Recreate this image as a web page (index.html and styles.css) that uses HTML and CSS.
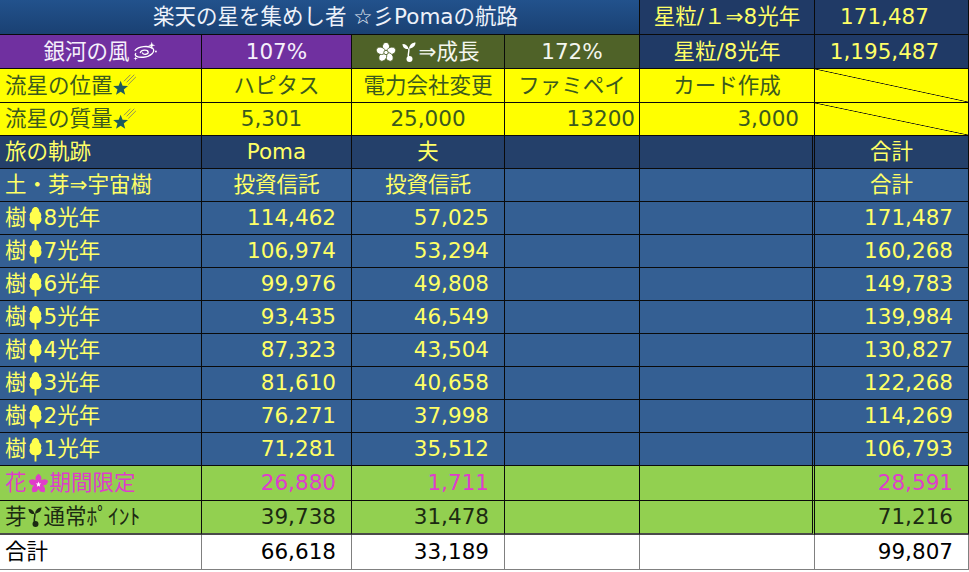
FILE: index.html
```html
<!DOCTYPE html>
<html lang="ja">
<head>
<meta charset="utf-8">
<title>楽天の星を集めし者 ☆彡Pomaの航路</title>
<link rel="stylesheet" href="styles.css">
</head>
<body>
<div class="sheet">
  <!-- row 1 -->
  <div class="c title span4">楽天の星を集めし者 ☆彡Pomaの航路</div>
  <div class="c navy m">星粒/１⇒8光年</div>
  <div class="c navy m shift">171,487</div>

  <!-- row 2 -->
  <div class="c purple m">銀河の風<svg class="ico galaxy" viewBox="0 0 26 20" width="27" height="21"><g fill="none" stroke="#fff" stroke-width="1.3" stroke-linecap="round"><path d="M4 9 C7 5 17 4 21 7 C24 10 19 15 12 15.5 C6 16 3 14 4.5 12"/><path d="M9 11 C10 8 16 8 16.5 10.5 C17 13 12 13.5 11 11.5"/></g><path d="M20 0.5 L20.8 3.2 L23.5 4 L20.8 4.8 L20 7.5 L19.2 4.8 L16.5 4 L19.2 3.2Z" fill="#fff"/><path d="M4.5 14.5 L5 16.2 L6.7 16.7 L5 17.2 L4.5 18.9 L4 17.2 L2.3 16.7 L4 16.2Z" fill="#fff"/><circle cx="24" cy="10" r="0.9" fill="#fff"/></svg></div>
  <div class="c purple m">107%</div>
  <div class="c olive m"><svg class="ico sakura" viewBox="0 0 20 20" width="20" height="20"><g fill="#fff" stroke="#4f6228" stroke-width="0.8"><ellipse cx="10" cy="5" rx="3.6" ry="4.6"/><ellipse cx="10" cy="5" rx="3.6" ry="4.6" transform="rotate(72 10 10.5)"/><ellipse cx="10" cy="5" rx="3.6" ry="4.6" transform="rotate(144 10 10.5)"/><ellipse cx="10" cy="5" rx="3.6" ry="4.6" transform="rotate(216 10 10.5)"/><ellipse cx="10" cy="5" rx="3.6" ry="4.6" transform="rotate(288 10 10.5)"/></g><circle cx="10" cy="10.5" r="2.2" fill="#fff" stroke="#4f6228" stroke-width="0.9"/></svg><svg class="ico sprout" viewBox="0 0 14 22" width="14" height="22"><g fill="#fff"><path d="M6.5 8 C3 8.5 0.5 6.5 0.5 3 C4 3 6.2 5 6.5 8Z"/><path d="M7 7.5 C7.5 3.5 10.5 1.5 13.5 1.5 C13.5 5 10.5 7.5 7 7.5Z"/><circle cx="7.5" cy="18" r="3"/></g><path d="M6.8 7.5 C7.5 11 5.5 13 6.5 16" fill="none" stroke="#fff" stroke-width="1.5"/></svg>⇒成長</div>
  <div class="c olive m">172%</div>
  <div class="c navy m">星粒/8光年</div>
  <div class="c navy m shift">1,195,487</div>

  <!-- row 3 -->
  <div class="c yellow l">流星の位置<svg class="ico shoot" viewBox="0 0 22 22" width="24" height="24"><g stroke="#8d8f55" stroke-width="0.9"><line x1="10" y1="8.5" x2="16" y2="2.5"/><line x1="12.5" y1="9.5" x2="19.5" y2="2.5"/><line x1="14" y1="11.5" x2="21" y2="4.5"/></g><path d="M7 8 L8.8 12.7 L13.8 12.9 L9.9 16 L11.2 20.8 L7 18 L2.8 20.8 L4.1 16 L0.2 12.9 L5.2 12.7Z" fill="#1e5b5e"/></svg></div>
  <div class="c yellow m">ハピタス</div>
  <div class="c yellow m">電力会社変更</div>
  <div class="c yellow m">ファミペイ</div>
  <div class="c yellow m">カード作成</div>
  <div class="c yellow diag"></div>

  <!-- row 4 -->
  <div class="c yellow l">流星の質量<svg class="ico shoot" viewBox="0 0 22 22" width="24" height="24"><g stroke="#8d8f55" stroke-width="0.9"><line x1="10" y1="8.5" x2="16" y2="2.5"/><line x1="12.5" y1="9.5" x2="19.5" y2="2.5"/><line x1="14" y1="11.5" x2="21" y2="4.5"/></g><path d="M7 8 L8.8 12.7 L13.8 12.9 L9.9 16 L11.2 20.8 L7 18 L2.8 20.8 L4.1 16 L0.2 12.9 L5.2 12.7Z" fill="#1e5b5e"/></svg></div>
  <div class="c yellow m nudge">5,301</div>
  <div class="c yellow m">25,000</div>
  <div class="c yellow r tight">13200</div>
  <div class="c yellow r">3,000</div>
  <div class="c yellow diag"></div>

  <!-- row 5 -->
  <div class="c dark l">旅の軌跡</div>
  <div class="c dark m">Poma</div>
  <div class="c dark m">夫</div>
  <div class="c dark"></div>
  <div class="c dark dbl"></div>
  <div class="c dark m">合計</div>

  <!-- row 6 -->
  <div class="c blue l">土・芽⇒宇宙樹</div>
  <div class="c blue m">投資信託</div>
  <div class="c blue m">投資信託</div>
  <div class="c blue"></div>
  <div class="c blue dbl"></div>
  <div class="c blue m">合計</div>

  <!-- tree rows -->
  <div class="c blue l">樹<svg class="ico tree" viewBox="0 0 14 24" width="15" height="25"><path d="M7 1 C4.5 1 3.5 3.5 3.2 5.5 C1.5 6.5 1 9 1.8 10.5 C0.8 12 1 15 3 16.5 C4.5 17.8 9.5 17.8 11 16.5 C13 15 13.2 12 12.2 10.5 C13 9 12.5 6.5 10.8 5.5 C10.5 3.5 9.5 1 7 1Z" fill="#ffff4d"/><rect x="6.1" y="16" width="1.8" height="7.5" fill="#ffff4d"/></svg>8光年</div>
  <div class="c blue r">114,462</div>
  <div class="c blue r">57,025</div>
  <div class="c blue"></div>
  <div class="c blue dbl"></div>
  <div class="c blue r">171,487</div>

  <div class="c blue l">樹<svg class="ico tree" viewBox="0 0 14 24" width="15" height="25"><path d="M7 1 C4.5 1 3.5 3.5 3.2 5.5 C1.5 6.5 1 9 1.8 10.5 C0.8 12 1 15 3 16.5 C4.5 17.8 9.5 17.8 11 16.5 C13 15 13.2 12 12.2 10.5 C13 9 12.5 6.5 10.8 5.5 C10.5 3.5 9.5 1 7 1Z" fill="#ffff4d"/><rect x="6.1" y="16" width="1.8" height="7.5" fill="#ffff4d"/></svg>7光年</div>
  <div class="c blue r">106,974</div>
  <div class="c blue r">53,294</div>
  <div class="c blue"></div>
  <div class="c blue dbl"></div>
  <div class="c blue r">160,268</div>

  <div class="c blue l">樹<svg class="ico tree" viewBox="0 0 14 24" width="15" height="25"><path d="M7 1 C4.5 1 3.5 3.5 3.2 5.5 C1.5 6.5 1 9 1.8 10.5 C0.8 12 1 15 3 16.5 C4.5 17.8 9.5 17.8 11 16.5 C13 15 13.2 12 12.2 10.5 C13 9 12.5 6.5 10.8 5.5 C10.5 3.5 9.5 1 7 1Z" fill="#ffff4d"/><rect x="6.1" y="16" width="1.8" height="7.5" fill="#ffff4d"/></svg>6光年</div>
  <div class="c blue r">99,976</div>
  <div class="c blue r">49,808</div>
  <div class="c blue"></div>
  <div class="c blue dbl"></div>
  <div class="c blue r">149,783</div>

  <div class="c blue l">樹<svg class="ico tree" viewBox="0 0 14 24" width="15" height="25"><path d="M7 1 C4.5 1 3.5 3.5 3.2 5.5 C1.5 6.5 1 9 1.8 10.5 C0.8 12 1 15 3 16.5 C4.5 17.8 9.5 17.8 11 16.5 C13 15 13.2 12 12.2 10.5 C13 9 12.5 6.5 10.8 5.5 C10.5 3.5 9.5 1 7 1Z" fill="#ffff4d"/><rect x="6.1" y="16" width="1.8" height="7.5" fill="#ffff4d"/></svg>5光年</div>
  <div class="c blue r">93,435</div>
  <div class="c blue r">46,549</div>
  <div class="c blue"></div>
  <div class="c blue dbl"></div>
  <div class="c blue r">139,984</div>

  <div class="c blue l">樹<svg class="ico tree" viewBox="0 0 14 24" width="15" height="25"><path d="M7 1 C4.5 1 3.5 3.5 3.2 5.5 C1.5 6.5 1 9 1.8 10.5 C0.8 12 1 15 3 16.5 C4.5 17.8 9.5 17.8 11 16.5 C13 15 13.2 12 12.2 10.5 C13 9 12.5 6.5 10.8 5.5 C10.5 3.5 9.5 1 7 1Z" fill="#ffff4d"/><rect x="6.1" y="16" width="1.8" height="7.5" fill="#ffff4d"/></svg>4光年</div>
  <div class="c blue r">87,323</div>
  <div class="c blue r">43,504</div>
  <div class="c blue"></div>
  <div class="c blue dbl"></div>
  <div class="c blue r">130,827</div>

  <div class="c blue l">樹<svg class="ico tree" viewBox="0 0 14 24" width="15" height="25"><path d="M7 1 C4.5 1 3.5 3.5 3.2 5.5 C1.5 6.5 1 9 1.8 10.5 C0.8 12 1 15 3 16.5 C4.5 17.8 9.5 17.8 11 16.5 C13 15 13.2 12 12.2 10.5 C13 9 12.5 6.5 10.8 5.5 C10.5 3.5 9.5 1 7 1Z" fill="#ffff4d"/><rect x="6.1" y="16" width="1.8" height="7.5" fill="#ffff4d"/></svg>3光年</div>
  <div class="c blue r">81,610</div>
  <div class="c blue r">40,658</div>
  <div class="c blue"></div>
  <div class="c blue dbl"></div>
  <div class="c blue r">122,268</div>

  <div class="c blue l">樹<svg class="ico tree" viewBox="0 0 14 24" width="15" height="25"><path d="M7 1 C4.5 1 3.5 3.5 3.2 5.5 C1.5 6.5 1 9 1.8 10.5 C0.8 12 1 15 3 16.5 C4.5 17.8 9.5 17.8 11 16.5 C13 15 13.2 12 12.2 10.5 C13 9 12.5 6.5 10.8 5.5 C10.5 3.5 9.5 1 7 1Z" fill="#ffff4d"/><rect x="6.1" y="16" width="1.8" height="7.5" fill="#ffff4d"/></svg>2光年</div>
  <div class="c blue r">76,271</div>
  <div class="c blue r">37,998</div>
  <div class="c blue"></div>
  <div class="c blue dbl"></div>
  <div class="c blue r">114,269</div>

  <div class="c blue l">樹<svg class="ico tree" viewBox="0 0 14 24" width="15" height="25"><path d="M7 1 C4.5 1 3.5 3.5 3.2 5.5 C1.5 6.5 1 9 1.8 10.5 C0.8 12 1 15 3 16.5 C4.5 17.8 9.5 17.8 11 16.5 C13 15 13.2 12 12.2 10.5 C13 9 12.5 6.5 10.8 5.5 C10.5 3.5 9.5 1 7 1Z" fill="#ffff4d"/><rect x="6.1" y="16" width="1.8" height="7.5" fill="#ffff4d"/></svg>1光年</div>
  <div class="c blue r">71,281</div>
  <div class="c blue r">35,512</div>
  <div class="c blue"></div>
  <div class="c blue dbl"></div>
  <div class="c blue r">106,793</div>

  <!-- flower row -->
  <div class="c green pink l">花<svg class="ico hana" viewBox="0 0 20 20" width="21" height="21"><g fill="#e03dca"><path d="M10 0.8 L8.6 2 C7 3 6.6 6 8 8 L10 10 L12 8 C13.4 6 13 3 11.4 2Z"/><path d="M10 0.8 L8.6 2 C7 3 6.6 6 8 8 L10 10 L12 8 C13.4 6 13 3 11.4 2Z" transform="rotate(72 10 10.5)"/><path d="M10 0.8 L8.6 2 C7 3 6.6 6 8 8 L10 10 L12 8 C13.4 6 13 3 11.4 2Z" transform="rotate(144 10 10.5)"/><path d="M10 0.8 L8.6 2 C7 3 6.6 6 8 8 L10 10 L12 8 C13.4 6 13 3 11.4 2Z" transform="rotate(216 10 10.5)"/><path d="M10 0.8 L8.6 2 C7 3 6.6 6 8 8 L10 10 L12 8 C13.4 6 13 3 11.4 2Z" transform="rotate(288 10 10.5)"/><circle cx="10" cy="10.5" r="4.5"/></g><path d="M10 8 L10.7 10 L12.6 10.1 L11.1 11.3 L11.6 13.2 L10 12.1 L8.4 13.2 L8.9 11.3 L7.4 10.1 L9.3 10Z" fill="#fff"/></svg>期間限定</div>
  <div class="c green pink r">26,880</div>
  <div class="c green pink r">1,711</div>
  <div class="c green"></div>
  <div class="c green dbl"></div>
  <div class="c green pink r">28,591</div>

  <!-- sprout row -->
  <div class="c green dk l sep">芽<svg class="ico sprout" viewBox="0 0 14 22" width="14" height="22"><g fill="#1c2a12"><path d="M6.5 8 C3 8.5 0.5 6.5 0.5 3 C4 3 6.2 5 6.5 8Z"/><path d="M7 7.5 C7.5 3.5 10.5 1.5 13.5 1.5 C13.5 5 10.5 7.5 7 7.5Z"/><circle cx="7.5" cy="18" r="3"/></g><path d="M6.8 7.5 C7.5 11 5.5 13 6.5 16" fill="none" stroke="#1c2a12" stroke-width="1.6"/></svg>通常ﾎﾟｲﾝﾄ</div>
  <div class="c green dk r sep">39,738</div>
  <div class="c green dk r sep">31,478</div>
  <div class="c green sep"></div>
  <div class="c green dbl sep"></div>
  <div class="c green dk r sep">71,216</div>

  <!-- total row -->
  <div class="c white l">合計</div>
  <div class="c white r">66,618</div>
  <div class="c white r">33,189</div>
  <div class="c white"></div>
  <div class="c white"></div>
  <div class="c white r">99,807</div>
</div>
</body>
</html>
```

FILE: styles.css
```css
html, body {
  margin: 0;
  padding: 0;
  background: #ffffff;
}

body {
  font-family: "DejaVu Sans", "Noto Sans CJK JP", sans-serif;
  font-size: 21.5px;
}

.sheet {
  display: grid;
  grid-template-columns: 202px 150px 153px 135px 175px 154px;
  grid-template-rows: 35px 34px 34px 33px 33px 33px repeat(8, 33px) 35px 34px 35px;
  width: 969px;
}

.c {
  box-sizing: border-box;
  border-right: 1px solid #0a0a0a;
  border-bottom: 1px solid #0a0a0a;
  display: flex;
  align-items: center;
  white-space: nowrap;
  overflow: hidden;
  line-height: 1;
}

.l { justify-content: flex-start; padding-left: 5px; }
.m { justify-content: center; }
.r { justify-content: flex-end; padding-right: 15px; }
.tight { padding-right: 4px; }
.shift { padding-right: 14px; }
.nudge { padding-right: 10px; }

.span4 { grid-column: span 4; }

.title {
  justify-content: center;
  padding-left: 32px;
  background: linear-gradient(to bottom, #22528c, #1a4173);
  color: #eef2fa;
}

.navy {
  background: #203a66;
  color: #ffff66;
}

.purple {
  background: #7030a0;
  color: #f6f0fb;
}

.olive {
  background: #4f6228;
  color: #f4f6ee;
}

.yellow {
  background: #ffff00;
  color: #3b5a1e;
}

.diag {
  background: linear-gradient(to top right, #ffff00 calc(50% - 0.7px), #111 50%, #ffff00 calc(50% + 0.7px));
}

.dark {
  background: #24406a;
  color: #ffff66;
}

.blue {
  background: #345f93;
  color: #ffff66;
}

.dbl {
  border-right: 3px double #0a0a0a;
}

.green {
  background: #92d050;
  color: #1c2a12;
}

.pink { color: #df3dcb; }
.dk { color: #1c2a12; }

.sep {
  border-bottom: 2px solid #4a4a4a;
}

.white {
  background: #ffffff;
  color: #000000;
  border-right-color: #808080;
  border-bottom-color: #808080;
}

.ico {
  display: block;
  flex: none;
}

.galaxy { margin-left: 1px; }
.shoot { margin-left: 0; margin-top: -3px; }
.sakura { margin-right: 5px; }
.sprout { margin: 0 2px 0 1px; }
.tree { margin: 0 1px; }
.hana { margin: 0 1px; }
```
